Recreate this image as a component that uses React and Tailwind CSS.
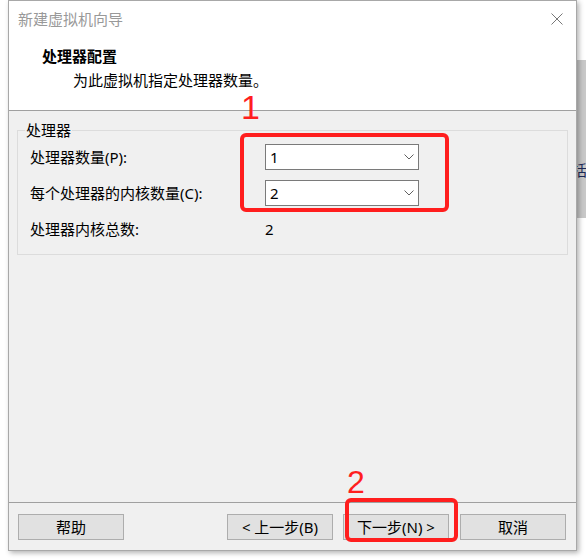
import React from "react";

const ui = "font-['Noto_Sans','Noto_Sans_CJK_SC',sans-serif]";

function Combo({ value }) {
  return (
    <div className="flex h-[26px] w-[154px] items-center justify-between border border-[#7a7a7a] bg-white pl-[4px] pr-[4px]">
      <span className="text-[15px] leading-[20px] text-black">{value}</span>
      <svg width="10" height="6" viewBox="0 0 10 6">
        <path d="M0.5 0.5 L5 5 L9.5 0.5" fill="none" stroke="#606060" strokeWidth="1" />
      </svg>
    </div>
  );
}

function Btn({ children }) {
  return (
    <button className="flex h-[26px] w-[106px] items-center justify-center border border-[#adadad] bg-[#e1e1e1] text-[15px] leading-[20px] text-black">
      {children}
    </button>
  );
}

export default function App() {
  return (
    <div className={`relative flex h-[559px] w-[586px] overflow-hidden bg-white ${ui}`}>
      <div className="w-[8px] shrink-0" />

      {/* dialog */}
      <div className="relative z-10 flex h-[551px] w-[569px] shrink-0 flex-col border border-[#a8a8a8] bg-white shadow-[2px_2px_5px_rgba(0,0,0,0.3)]">
        {/* title bar */}
        <div className="flex h-[36px] items-center justify-between pl-[9px] pr-[13px]">
          <span className="text-[15px] leading-[20px] text-[#999999]">新建虚拟机向导</span>
          <svg width="12" height="12" viewBox="0 0 12 12">
            <path d="M0.5 0.5 L11.5 11.5 M11.5 0.5 L0.5 11.5" stroke="#777777" strokeWidth="1" />
          </svg>
        </div>

        {/* header */}
        <div className="h-[74px] border-b border-[#a0a0a0] pt-[9px]">
          <div className="pl-[33px] text-[15px] font-bold leading-[20px] text-black">处理器配置</div>
          <div className="mt-[4px] pl-[64px] text-[15px] leading-[20px] text-black">为此虚拟机指定处理器数量。</div>
        </div>

        {/* body */}
        <div className="h-[391px] bg-[#f0f0f0] pt-[10px]">
          <fieldset className="mx-[8px] border border-[#dcdcdc] pb-[12px] pl-[12px] pt-[4px]">
            <legend className="ml-[-5px] px-[1px] text-[15px] leading-[19px] text-black">处理器</legend>
            <div className="flex flex-col gap-[10px]">
              <div className="grid h-[26px] grid-cols-[235px_154px] items-center">
                <span className="text-[15px] leading-[20px] text-black">处理器数量(P):</span>
                <Combo value="1" />
              </div>
              <div className="grid h-[26px] grid-cols-[235px_154px] items-center">
                <span className="text-[15px] leading-[20px] text-black">每个处理器的内核数量(C):</span>
                <Combo value="2" />
              </div>
              <div className="grid h-[26px] grid-cols-[235px_154px] items-center">
                <span className="text-[15px] leading-[20px] text-black">处理器内核总数:</span>
                <span className="text-[15px] leading-[20px] text-black">2</span>
              </div>
            </div>
          </fieldset>
        </div>

        {/* footer */}
        <div className="flex h-[48px] items-start justify-between border-t border-[#a0a0a0] bg-[#f0f0f0] pl-[9px] pr-[10px] pt-[11px]">
          <Btn>帮助</Btn>
          <div className="flex">
            <Btn>&lt; 上一步(B)</Btn>
            <div className="ml-[10px]">
              <Btn>下一步(N) &gt;</Btn>
            </div>
            <div className="ml-[11px]">
              <Btn>取消</Btn>
            </div>
          </div>
        </div>
      </div>

      {/* window behind, right edge */}
      <div className="flex flex-1 flex-col overflow-hidden">
        <div className="h-[60px] bg-white" />
        <div className="h-[158px] overflow-hidden bg-[#c8c8c8]">
          <div className="ml-[-5px] mt-[100px] text-[15px] leading-[20px] text-[#1c2a5a]">括</div>
        </div>
        <div className="flex-1 bg-white" />
      </div>

      {/* red annotations */}
      <div className="absolute left-[240px] top-[133px] z-20 h-[79px] w-[209px] rounded-[6px] border-[4px] border-[#ff1e1e]" />
      <div className="absolute left-[241px] top-[90px] z-20 font-['Liberation_Sans',sans-serif] text-[34px] leading-none text-[#ff1e1e]">1</div>
      <div className="absolute left-[345px] top-[498px] z-20 h-[44px] w-[113px] rounded-[6px] border-[4px] border-[#ff1e1e]" />
      <div className="absolute left-[347px] top-[466px] z-20 font-['Liberation_Sans',sans-serif] text-[32px] leading-none text-[#ff1e1e]">2</div>
    </div>
  );
}
